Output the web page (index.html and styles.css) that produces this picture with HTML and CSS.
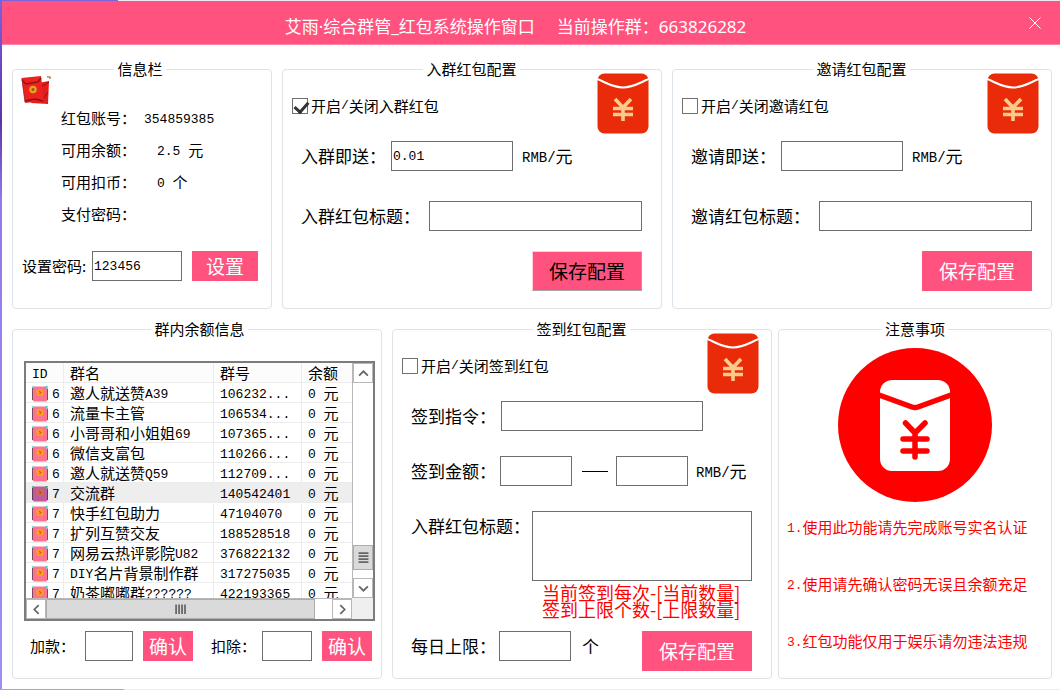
FILE: index.html
```html
<!DOCTYPE html>
<html lang="zh-CN">
<head>
<meta charset="utf-8">
<title>艾雨·综合群管</title>
<link rel="stylesheet" href="styles.css">
</head>
<body>
<svg class="defs" aria-hidden="true">
  <symbol id="envelope" viewBox="0 0 52 62">
    <rect x="0.5" y="0.5" width="51" height="60" rx="7" fill="#e92b09"/>
    <path d="M0 6 C10 10 16 14.500 26 14.500 S42 10 52 6" fill="none" stroke="#fff" stroke-width="2"/>
    <path d="M18 26 L26 34.500 L34 26 M16 35.500 H36 M16 41.500 H36 M26 34 V48" fill="none" stroke="#fbcb8c" stroke-width="3.6"/>
  </symbol>
  <symbol id="group" viewBox="0 0 16 16">
    <rect x="0.5" y="0.5" width="15" height="15" rx="2" fill="#fa7390"/>
    <path d="M0.5 2 V14 M15.5 3 V14" stroke="#7d4a5c" stroke-width="1"/>
    <path d="M0 1 H2 M13 0.5 H16 M14.5 2.5 H16" stroke="#4be0c8" stroke-width="1.4"/>
    <circle cx="8" cy="6.500" r="3.600" fill="#ffa01e"/>
    <path d="M7 5 L9 6.500 L7.500 8" fill="none" stroke="#e8541c" stroke-width="1.200"/>
  </symbol>
</svg>
<div class="window">
  <header class="titlebar">
    <h1 class="title"><span>艾雨·综合群管_红包系统操作窗口</span><span>当前操作群：663826282</span></h1>
    <button class="close" type="button" aria-label="关闭"><svg viewBox="0 0 12 12" width="12" height="12"><path d="M0.500 0.500 L11.500 11.500 M11.500 0.500 L0.500 11.500" stroke="#fff" stroke-width="1" fill="none"/></svg></button>
  </header>
  <main class="content">
    <div class="row top">
      <fieldset class="panel info">
        <legend>信息栏</legend>
        <svg class="packets" viewBox="0 0 30 30" aria-hidden="true">
          <path d="M17 8 L28 6 L27 29 L10 28 Z" fill="#e51c1c"/>
          <path d="M20 12 L28 7 M22 24 L27 17" stroke="#8d1414" stroke-width="1"/>
          <path d="M0.500 3 L20 1 L23 26 L4 28 Z" fill="#ee2020"/>
          <path d="M1 5 L5 9 L17 7 L20 3 M4 26 L14 24 L22 26" stroke="#861515" stroke-width="1.300" fill="none"/>
          <path d="M1 4 L4 27" stroke="#9b2a22" stroke-width="0.800"/>
          <circle cx="12" cy="14.500" r="3.800" fill="#e5a21b"/>
          <circle cx="12" cy="14.500" r="1.500" fill="#a35414"/>
          <path d="M26 2 H29 V4" stroke="#a88a72" stroke-width="1.500" fill="none"/>
        </svg>
        <dl class="facts">
          <dt>红包账号：</dt><dd class="near"><span class="n">354859385</span></dd>
          <dt>可用余额：</dt><dd><span class="n">2.5 </span>元</dd>
          <dt>可用扣币：</dt><dd><span class="n">0 </span>个</dd>
          <dt>支付密码：</dt><dd></dd>
        </dl>
        <div class="line password">
          <label for="pwd">设置密码:</label>
          <input id="pwd" class="w90" type="text" value="123456" autofocus>
          <button class="btn set" type="button">设置</button>
        </div>
      </fieldset>

      <fieldset class="panel config">
        <legend>入群红包配置</legend>
        <svg class="envelope" aria-hidden="true"><use href="#envelope"/></svg>
        <label class="check"><input type="checkbox" checked>开启<span class="n">/</span>关闭入群红包</label>
        <div class="line first">
          <label for="join-amt">入群即送：</label>
          <input id="join-amt" class="w122" type="text" value="0.01">
          <span class="unit"><span class="m">RMB/</span>元</span>
        </div>
        <div class="line heading">
          <label for="join-title">入群红包标题：</label>
          <input id="join-title" class="grow" type="text">
        </div>
        <div class="actions"><button class="btn save active" type="button">保存配置</button></div>
      </fieldset>

      <fieldset class="panel config">
        <legend>邀请红包配置</legend>
        <svg class="envelope" aria-hidden="true"><use href="#envelope"/></svg>
        <label class="check"><input type="checkbox">开启<span class="n">/</span>关闭邀请红包</label>
        <div class="line first">
          <label for="inv-amt">邀请即送：</label>
          <input id="inv-amt" class="w122" type="text">
          <span class="unit"><span class="m">RMB/</span>元</span>
        </div>
        <div class="line heading">
          <label for="inv-title">邀请红包标题：</label>
          <input id="inv-title" class="grow" type="text">
        </div>
        <div class="actions"><button class="btn save" type="button">保存配置</button></div>
      </fieldset>
    </div>

    <div class="row bottom">
      <fieldset class="panel groups">
        <legend>群内余额信息</legend>
        <div class="list">
          <div class="view">
            <table>
              <colgroup><col class="c-id"><col class="c-name"><col class="c-num"><col></colgroup>
              <thead><tr><th><span class="n">ID</span></th><th>群名</th><th>群号</th><th>余额</th></tr></thead>
              <tbody>
                <tr><td><svg><use href="#group"/></svg><span class="n">6</span></td><td>邀人就送赞<span class="n">A39</span></td><td><span class="n">106232...</span></td><td><span class="n">0 </span>元</td></tr>
                <tr><td><svg><use href="#group"/></svg><span class="n">6</span></td><td>流量卡主管</td><td><span class="n">106534...</span></td><td><span class="n">0 </span>元</td></tr>
                <tr><td><svg><use href="#group"/></svg><span class="n">6</span></td><td>小哥哥和小姐姐<span class="n">69</span></td><td><span class="n">107365...</span></td><td><span class="n">0 </span>元</td></tr>
                <tr><td><svg><use href="#group"/></svg><span class="n">6</span></td><td>微信支富包</td><td><span class="n">110266...</span></td><td><span class="n">0 </span>元</td></tr>
                <tr><td><svg><use href="#group"/></svg><span class="n">6</span></td><td>邀人就送赞<span class="n">Q59</span></td><td><span class="n">112709...</span></td><td><span class="n">0 </span>元</td></tr>
                <tr class="selected"><td><svg><use href="#group"/></svg><span class="n">7</span></td><td>交流群</td><td><span class="n">140542401</span></td><td><span class="n">0 </span>元</td></tr>
                <tr><td><svg><use href="#group"/></svg><span class="n">7</span></td><td>快手红包助力</td><td><span class="n">47104070</span></td><td><span class="n">0 </span>元</td></tr>
                <tr><td><svg><use href="#group"/></svg><span class="n">7</span></td><td>扩列互赞交友</td><td><span class="n">188528518</span></td><td><span class="n">0 </span>元</td></tr>
                <tr><td><svg><use href="#group"/></svg><span class="n">7</span></td><td>网易云热评影院<span class="n">U82</span></td><td><span class="n">376822132</span></td><td><span class="n">0 </span>元</td></tr>
                <tr><td><svg><use href="#group"/></svg><span class="n">7</span></td><td><span class="n">DIY</span>名片背景制作群</td><td><span class="n">317275035</span></td><td><span class="n">0 </span>元</td></tr>
                <tr><td><svg><use href="#group"/></svg><span class="n">7</span></td><td>奶茶嘟嘟群<span class="n">??????</span></td><td><span class="n">422193365</span></td><td><span class="n">0 </span>元</td></tr>
              </tbody>
            </table>
          </div>
          <div class="vbar">
            <button type="button" aria-label="向上"><svg viewBox="0 0 10 10"><path d="M1 7 L5 3 L9 7"/></svg></button>
            <div class="vtrack"><div class="vthumb"><svg viewBox="0 0 10 10"><path d="M0.500 1 H9.500 M0.500 3.700 H9.500 M0.500 6.400 H9.500 M0.500 9.100 H9.500"/></svg></div></div>
            <button type="button" aria-label="向下"><svg viewBox="0 0 10 10"><path d="M1 3 L5 7 L9 3"/></svg></button>
          </div>
          <div class="hbar">
            <button type="button" aria-label="向左"><svg viewBox="0 0 10 10"><path d="M7 1 L3 5 L7 9"/></svg></button>
            <div class="htrack"><div class="hthumb"><svg viewBox="0 0 10 10"><path d="M1 0.500 V9 M3.700 0.500 V9 M6.400 0.500 V9 M9.100 0.500 V9"/></svg></div></div>
            <button type="button" aria-label="向右"><svg viewBox="0 0 10 10"><path d="M3 1 L7 5 L3 9"/></svg></button>
          </div>
          <div class="corner"></div>
        </div>
        <div class="line adjust">
          <div class="pair"><label for="add">加款：</label><input id="add" class="w48" type="text"><button class="btn ok" type="button">确认</button></div>
          <div class="pair"><label for="sub">扣除：</label><input id="sub" class="w50" type="text"><button class="btn ok" type="button">确认</button></div>
        </div>
      </fieldset>

      <fieldset class="panel config signin">
        <legend>签到红包配置</legend>
        <svg class="envelope" aria-hidden="true"><use href="#envelope"/></svg>
        <label class="check"><input type="checkbox">开启<span class="n">/</span>关闭签到红包</label>
        <div class="line command">
          <label for="cmd">签到指令：</label>
          <input id="cmd" class="w202" type="text">
        </div>
        <div class="line amount">
          <label for="amt-min">签到金额：</label>
          <input id="amt-min" class="w72" type="text">
          <span class="dash"></span>
          <input id="amt-max" class="w72" type="text" aria-label="签到金额上限">
          <span class="unit"><span class="m">RMB/</span>元</span>
        </div>
        <div class="line message">
          <label for="msg">入群红包标题：</label>
          <div class="grow">
            <textarea id="msg"></textarea>
            <p class="hint">当前签到每次-[当前数量]<br>签到上限个数-[上限数量]</p>
          </div>
        </div>
        <div class="line daily">
          <label for="daily">每日上限：</label>
          <input id="daily" class="w72" type="text">
          <span class="unit">个</span>
          <button class="btn save" type="button">保存配置</button>
        </div>
      </fieldset>

      <fieldset class="panel notes">
        <legend>注意事项</legend>
        <svg class="badge" viewBox="0 0 154 154" aria-hidden="true">
          <circle cx="77" cy="77" r="77" fill="#fe0000"/>
          <rect x="42" y="32" width="70" height="91" rx="12" fill="#fff"/>
          <path d="M41 47 L74 59 Q77 60 80 59 L113 47" fill="none" stroke="#fe0000" stroke-width="5.500"/>
          <path d="M67.500 75 L77 85 L87 75 M65 91 H89 M65 103 H89 M77 86 V109" fill="none" stroke="#fe0000" stroke-width="5.500" stroke-linecap="round"/>
        </svg>
        <p><span class="n">1.</span>使用此功能请先完成账号实名认证</p>
        <p><span class="n">2.</span>使用请先确认密码无误且余额充足</p>
        <p><span class="n">3.</span>红包功能仅用于娱乐请勿违法违规</p>
      </fieldset>
    </div>
  </main>
</div>
</body>
</html>
```
FILE: styles.css
```css
* { box-sizing: border-box; }

body {
  margin: 0;
  padding: 1px 0 1px 2px;
  min-height: 100vh;
  display: flex;
  background:
    linear-gradient(90deg, #a99cf8 124px, #fae3fa 124px) bottom / 100% 1px no-repeat,
    linear-gradient(90deg, #7c63d8 118px, #efe6f2 118px) top / 100% 1px no-repeat,
    linear-gradient(#7b62dc, #5b34a8 120px, #8f7bea 200px, #9c90f6);
  font: 15px/20px "Noto Sans CJK SC", sans-serif;
  color: #000;
}

.defs { position: absolute; width: 0; height: 0; }

.window { flex: 1; min-width: 0; background: #fff; }

.titlebar {
  display: flex;
  align-items: center;
  height: 44px;
  padding-right: 19px;
  background: #ff527f;
  border-bottom: 1px solid #ff86a5;
}
.title {
  flex: 1;
  display: flex;
  justify-content: center;
  gap: 22px;
  margin: 0;
  padding-top: 8px;
  font: 17px/24px "Noto Sans", "Noto Sans CJK SC", sans-serif;
  color: #fff;
}
.close {
  display: flex;
  padding: 0;
  border: 0;
  background: none;
}

.content {
  display: flex;
  flex-direction: column;
  gap: 10px;
  padding: 14px 8px 10px 10px;
}
.row { display: grid; gap: 10px; }
.top { grid-template-columns: 260fr 380fr 380fr; }
.bottom { grid-template-columns: 370fr 380fr 270fr; }

.panel {
  position: relative;
  min-width: 0;
  margin: 0;
  padding: 0 19px 0 18px;
  border: 1px solid #dce4e9;
  border-radius: 4px;
}
.panel legend {
  margin: 0 auto;
  padding: 0 3px;
  height: 20px;
}
.info { padding: 0 13px 0 9px; }
.groups { padding: 0 6px 0 11px; }
.notes { margin-left: -4px; padding: 0 8px; }

.n { font: 13px/14px "Liberation Mono", monospace; vertical-align: 1px; white-space: pre; }
.m { font: 14px/14px "Liberation Mono", monospace; vertical-align: 1px; }

input[type="text"], textarea {
  display: block;
  height: 30px;
  margin: 0;
  padding: 0 1px;
  border: 1px solid #6e6e6e;
  border-radius: 0;
  outline: 0;
  background: #fff;
  font: 13px/20px "Liberation Mono", monospace;
  color: #000;
  resize: none;
}

.w48 { width: 48px; }
.w50 { width: 50px; }
.w72 { width: 72px; }
.w90 { width: 90px; }
.w122 { width: 122px; }
.w202 { width: 202px; }
.grow { flex: 1; min-width: 0; }

.btn {
  padding: 0;
  border: 0;
  background: #ff527f;
  color: #fff;
  font: 19px/30px "Noto Sans CJK SC", sans-serif;
}
.set { width: 66px; height: 30px; }
.ok { width: 50px; height: 30px; }
.save { width: 110px; height: 40px; }
.active {
  color: #000;
  border: 1px solid #a9a0a4;
  border-top-color: #ffd0dc;
  border-left-color: #ffd0dc;
}

.line { display: flex; align-items: center; }

/* account info */
.packets {
  position: absolute;
  top: -4px;
  left: 8px;
  width: 30px;
  height: 30px;
}
.facts {
  display: grid;
  grid-template-columns: 83px 1fr;
  margin: 29px 0 0 39px;
}
.facts dt { height: 20px; margin-bottom: 12px; }
.facts dd { margin: 0 0 0 13px; }
.facts .near { margin-left: 0; }
.password { margin: 15px 0 17px; }
.password label { flex: 1; white-space: nowrap; }
.set { margin-left: 10px; }

/* packet settings */
.envelope {
  position: absolute;
  top: -6px;
  right: 12px;
  width: 52px;
  height: 62px;
}
.check {
  display: flex;
  align-items: center;
  margin: 17px 0 0 -9px;
}
.check input {
  appearance: none;
  position: relative;
  width: 16px;
  height: 16px;
  margin: 0 3px 0 0;
  border: 1px solid #707070;
  background: #fff;
}
.check input:checked::after {
  content: "";
  position: absolute;
  left: 4px;
  top: 0;
  width: 6px;
  height: 11px;
  border: solid #333;
  border-width: 0 3px 3px 0;
  transform: rotate(42deg);
}
.config .line { font-size: 17px; }
.config .first { gap: 5px; margin-top: 25px; }
.unit { margin-left: 4px; }
.config .heading { gap: 9px; margin-top: 30px; }
.actions { display: flex; justify-content: flex-end; margin: 20px 0 17px; }

/* group list */
.list {
  display: grid;
  grid-template-columns: 1fr 21px;
  grid-template-rows: 235px 21px;
  margin-top: 22px;
  border: 2px solid #7c7c7c;
}
.view { overflow: hidden; }
.view table {
  width: 100%;
  table-layout: fixed;
  border-collapse: separate;
  border-spacing: 0;
}
.c-id { width: 38px; }
.c-name { width: 150px; }
.c-num { width: 88px; }
.view th, .view td {
  height: 20px;
  padding: 0 0 0 6px;
  border-right: 1px solid #ececec;
  border-bottom: 1px solid #ececec;
  font-weight: normal;
  line-height: 17px;
  text-align: left;
  white-space: nowrap;
}
.view .n { line-height: 10px; }
.view th { background: #fcfcfc; }
.view td:last-child, .view th:last-child { border-right: 0; }
.view svg { width: 16px; height: 16px; margin-right: 4px; vertical-align: -3px; }
.view .selected td { background: #eee; border-right-color: #eee; }
.selected svg { filter: hue-rotate(-30deg) brightness(0.8); }

.list button {
  display: flex;
  align-items: center;
  justify-content: center;
  width: 20px;
  height: 20px;
  padding: 0;
  border: 1px solid #b8b8b8;
  background: #fff;
}
.list button svg, .vthumb svg, .hthumb svg {
  width: 11px;
  height: 11px;
  fill: none;
  stroke: #666;
  stroke-width: 1.6;
}
.vbar, .hbar { display: flex; background: #fff; }
.vbar { flex-direction: column; border-left: 1px solid #b8b8b8; }
.hbar { border-top: 1px solid #b8b8b8; }
.vtrack, .htrack { flex: 1; display: flex; }
.vtrack { flex-direction: column; justify-content: flex-end; padding-bottom: 8px; }
.vthumb, .hthumb {
  display: flex;
  align-items: center;
  justify-content: center;
  border: 1px solid #adadad;
  background: #dadada;
}
.vthumb { height: 25px; }
.hthumb { width: 94%; }
.corner { background: #efefef; }

.adjust { justify-content: space-between; margin: 10px 3px 17px 6px; }
.pair { display: flex; align-items: center; gap: 10px; }
.pair + .pair input { margin-left: -4px; }

/* sign-in settings */
.command { gap: 5px; margin-top: 25px; }
.amount { gap: 4px; margin-top: 25px; }
.dash { width: 26px; margin: 0 4px 0 6px; border-top: 1px solid #000; }
.message { align-items: flex-start; gap: 2px; margin-top: 25px; }
.message label { padding-top: 5px; }
.message textarea { width: 100%; height: 70px; }
.hint {
  margin: 3px 0 13px 10px;
  font-size: 18px;
  line-height: 17px;
  color: #f00;
  white-space: nowrap;
}
.config .daily { align-items: flex-start; gap: 3px; margin-bottom: 7px; line-height: 30px; }
.daily .unit { margin-left: 8px; }
.daily .save { margin-left: auto; }

/* notes */
.badge {
  display: block;
  width: 154px;
  height: 154px;
  margin: 9px auto 15px;
}
.notes p { margin: 0 0 37px; color: #f00; white-space: nowrap; }
.notes p:last-child { margin-bottom: 0; }
```
